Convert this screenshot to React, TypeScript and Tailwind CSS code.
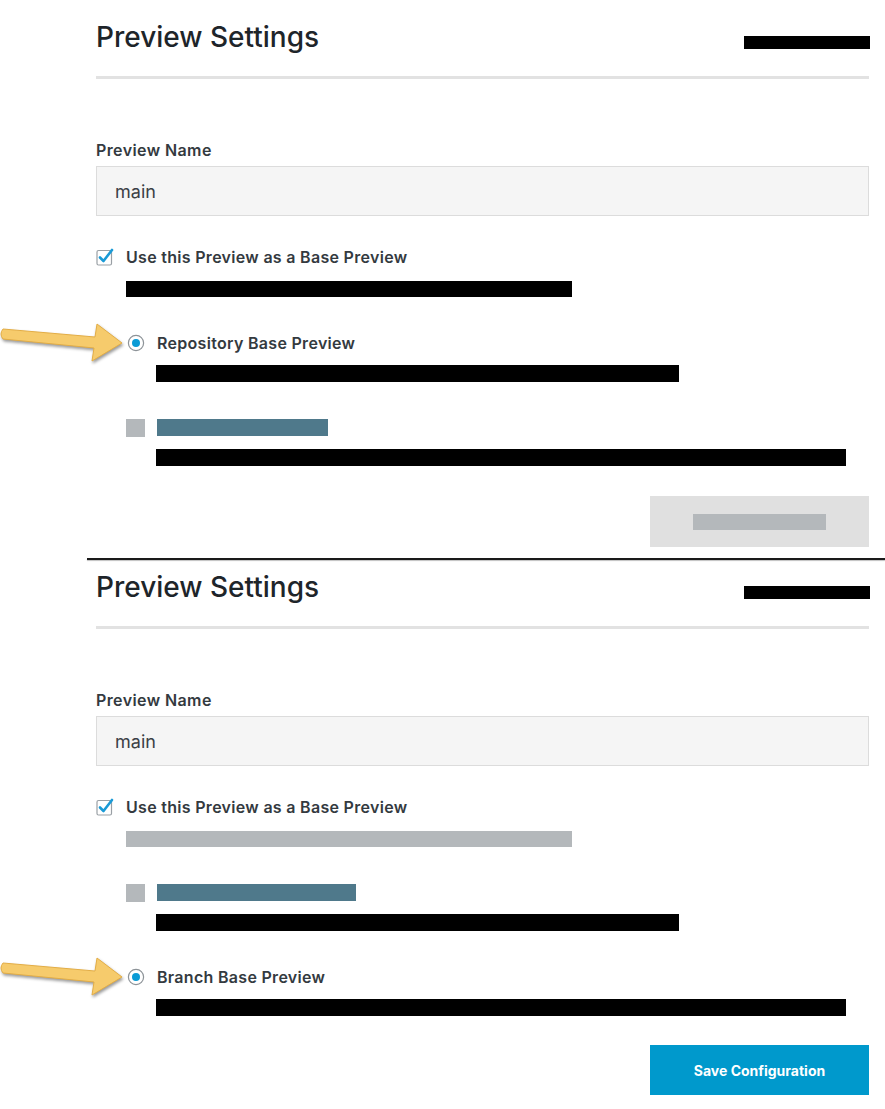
// Deux captures empilees des "Preview Settings" : base de depot / base de branche.
// Les barres noires et grises remplacent les textes masques de l'original.

const font = { fontFamily: 'Inter, "Liberation Sans", sans-serif' };

function Arrow() {
  return (
    <svg
      width="126"
      height="48"
      viewBox="0 0 126 48"
      className="pointer-events-none absolute left-[-126px] top-[-13px] drop-shadow-[1px_2px_1.5px_rgba(0,0,0,0.4)]"
      aria-hidden
    >
      <path
        d="M3 9 L95 17 L97 4 L122 23 L92 41 L94 28 L3 19 Q-1 14 3 9 Z"
        fill="#f6cb6c"
        stroke="#e3ad45"
        strokeWidth="1"
        strokeLinejoin="round"
      />
    </svg>
  );
}

function Checkbox() {
  return (
    <svg width="18" height="18" viewBox="0 0 18 18" aria-hidden>
      <rect x="1" y="2.5" width="14.5" height="14.5" rx="1.5" fill="#fff" stroke="#9aa0a5" strokeWidth="1.2" />
      <path d="M4 9.5 L7.5 13 L16 2" fill="none" stroke="#1a9ad6" strokeWidth="2.6" strokeLinecap="round" strokeLinejoin="round" />
    </svg>
  );
}

function Radio() {
  return (
    <svg width="18" height="18" viewBox="0 0 18 18" aria-hidden>
      <circle cx="9" cy="9" r="7.6" fill="#fff" stroke="#8d9398" strokeWidth="1.2" />
      <circle cx="9" cy="9" r="4" fill="#0a9bd6" />
    </svg>
  );
}

function RadioOption({ label }: { label: string }) {
  return (
    <div className="relative flex h-5 items-center gap-[12px] pl-[1px]">
      <Arrow />
      <Radio />
      <span className="text-[16px] font-semibold tracking-[0.3px] text-[#343a3f]">{label}</span>
    </div>
  );
}

function OtherOption({ width }: { width: string }) {
  return (
    <div className="flex items-start gap-3">
      <div className="h-[18px] w-[19px] bg-[#b4b8bb]" />
      <div className={`h-[17px] bg-[#4f798b] ${width}`} />
    </div>
  );
}

function Header() {
  return (
    <>
      <div className="flex items-start justify-between">
        <h2 className="h-[34px] text-[28px] font-medium leading-[34px] text-[#1e252a]">Preview Settings</h2>
        <div className="mr-[-1px] mt-[16px] h-[13px] w-[126px] bg-black" />
      </div>
      <div className="mt-[22px] h-[3px] bg-[#e2e2e2]" />
      <label className="mt-[61px] block h-5 text-[16px] font-semibold leading-5 tracking-[0.4px] text-[#343a3f]">
        Preview Name
      </label>
      <div className="mt-[6px] flex h-[50px] items-center border border-[#dcdcdc] bg-[#f5f5f5] px-[18px] text-[18px] text-[#3b4045]">
        main
      </div>
      <div className="mt-[31px] flex h-5 items-center gap-[12px]">
        <Checkbox />
        <span className="text-[16px] font-semibold tracking-[0.3px] text-[#343a3f]">Use this Preview as a Base Preview</span>
      </div>
    </>
  );
}

function RepositoryPanel() {
  return (
    <section className="pt-5">
      <Header />
      <div className="pl-[30px]">
        <div className="mt-[14px] h-[16px] w-[446px] bg-black" />
        <div className="mt-[36px]">
          <RadioOption label="Repository Base Preview" />
        </div>
        <div className="pl-[30px]">
          <div className="mt-[12px] h-[17px] w-[523px] bg-black" />
        </div>
        <div className="mt-[37px]">
          <OtherOption width="w-[171px]" />
        </div>
        <div className="pl-[30px]">
          <div className="mt-[12px] h-[17px] w-[690px] bg-black" />
        </div>
      </div>
      <div className="mt-[30px] flex justify-end">
        <div className="flex h-[51px] w-[219px] items-center justify-center bg-[#e0e0e0]">
          <div className="h-[16px] w-[133px] bg-[#b4b8bb]" />
        </div>
      </div>
    </section>
  );
}

function BranchPanel() {
  return (
    <section className="pt-[10px]">
      <Header />
      <div className="pl-[30px]">
        <div className="mt-[14px] h-[16px] w-[446px] bg-[#b4b8bb]" />
        <div className="mt-[37px]">
          <OtherOption width="w-[199px]" />
        </div>
        <div className="pl-[30px]">
          <div className="mt-[12px] h-[17px] w-[523px] bg-black" />
        </div>
        <div className="mt-[36px]">
          <RadioOption label="Branch Base Preview" />
        </div>
        <div className="pl-[30px]">
          <div className="mt-[12px] h-[17px] w-[690px] bg-black" />
        </div>
      </div>
      <div className="mt-[29px] flex justify-end">
        <button className="h-[50px] w-[219px] bg-[#0099cc] text-[14px] font-bold text-white">Save Configuration</button>
      </div>
    </section>
  );
}

export default function App() {
  return (
    <div className="min-h-[1109px] w-[885px] bg-white" style={font}>
      <div className="ml-[96px] mr-[16px]">
        <RepositoryPanel />
      </div>
      <div className="ml-[87px] mt-[11px] h-[2px] bg-[#1a1a1a] shadow-[0_1px_1px_rgba(0,0,0,0.25)]" />
      <div className="ml-[96px] mr-[16px]">
        <BranchPanel />
      </div>
    </div>
  );
}
